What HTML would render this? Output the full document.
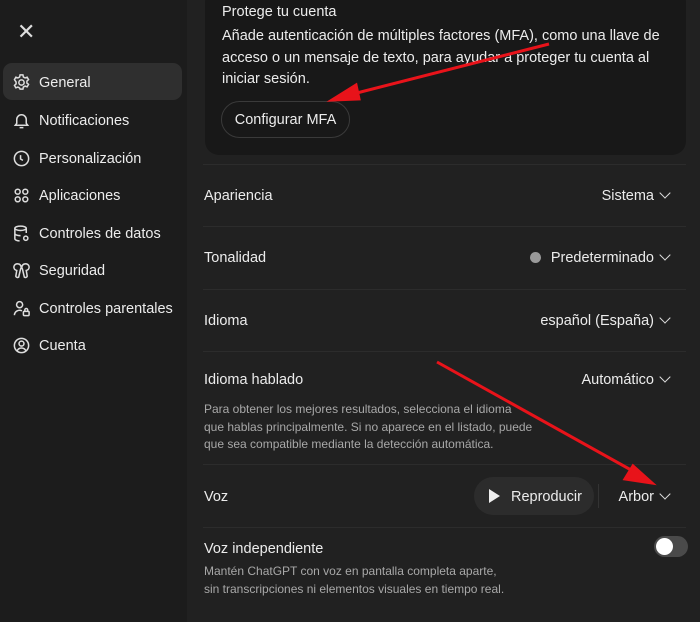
<!DOCTYPE html>
<html><head><meta charset="utf-8"><style>
*{margin:0;padding:0;box-sizing:border-box}
body{width:700px;height:622px;overflow:hidden;background:#212121;font-family:"Liberation Sans",sans-serif;color:#ececec;position:relative}
.side{position:absolute;left:0;top:0;width:187px;height:622px;background:#1c1c1c}
.a{position:absolute;white-space:nowrap}
.nav{position:absolute;left:12px;font-size:14.5px;color:#ececec;display:flex;align-items:center;gap:8px}
.nav svg{width:19px;height:19px;stroke:#ddd;fill:none;stroke-width:1.6}
.sel{position:absolute;left:3px;top:63px;width:179px;height:37px;background:#2f2f2f;border-radius:9px}
.card{position:absolute;left:205px;top:-12px;width:481px;height:167px;background:#181818;border-radius:14px}
.hr{position:absolute;left:203px;width:483px;height:1px;background:#2c2c2c}
.lbl{font-size:14.5px;color:#ececec}
.val{font-size:14.5px;color:#ececec;right:30px}
.chev{position:absolute;right:31px;width:8px;height:8px;border-right:1.6px solid #ddd;border-bottom:1.6px solid #ddd;transform:rotate(45deg)}
.help{font-size:12px;color:#a8a8a8;line-height:17.5px}
</style></head><body>
<div class="side"></div>
<div class="a" style="left:17px;top:21px;font-size:22px;color:#ddd;line-height:22px">✕</div>
<div class="sel"></div>
<div class="nav" style="top:73px"><svg viewBox="0 0 20 20"><circle cx="10" cy="10" r="2.8"/><path d="M8.5 2h3l.5 2.2 1.8 1 2.1-.8 1.5 2.6-1.7 1.5v2l1.7 1.5-1.5 2.6-2.1-.8-1.8 1-.5 2.2h-3L8 15.8l-1.8-1-2.1.8-1.5-2.6 1.7-1.5v-2L2.6 7l1.5-2.6 2.1.8 1.8-1z"/></svg>General</div>
<div class="nav" style="top:111px"><svg viewBox="0 0 20 20"><path d="M5 13V9a5 5 0 0110 0v4l1.5 2h-13zM8 17.5h4"/></svg>Notificaciones</div>
<div class="nav" style="top:149px"><svg viewBox="0 0 20 20"><circle cx="10" cy="10" r="7.5"/><path d="M9 6.5v4l2.5 1.5"/></svg>Personalización</div>
<div class="nav" style="top:186px"><svg viewBox="0 0 20 20"><circle cx="6" cy="6" r="2.6"/><circle cx="14" cy="6" r="2.6"/><circle cx="6" cy="14" r="2.6"/><circle cx="14" cy="14" r="2.6"/></svg>Aplicaciones</div>
<div class="nav" style="top:224px"><svg viewBox="0 0 20 20"><ellipse cx="9" cy="4.5" rx="6" ry="2.3"/><path d="M3 4.5v11c0 1.3 2.6 2.3 5 2.3M15 4.5v5M3 10c0 1.3 2.6 2.3 6 2.3"/><circle cx="14.5" cy="15" r="2.2"/></svg>Controles de datos</div>
<div class="nav" style="top:261px"><svg viewBox="0 0 20 20"><path d="M6 3a3.5 3.5 0 013 5.5L7 17a2 2 0 01-3-1l1-6A3.5 3.5 0 016 3zM14 3a3.5 3.5 0 00-3 5.5l2 8.5a2 2 0 003-1l-1-6A3.5 3.5 0 0014 3z"/></svg>Seguridad</div>
<div class="nav" style="top:299px"><svg viewBox="0 0 20 20"><circle cx="8" cy="6" r="3.2"/><path d="M2.5 17a5.5 5.5 0 018-4.5"/><rect x="12" y="13" width="6" height="4.5" rx="1"/><path d="M13.5 13v-1.5a1.5 1.5 0 013 0V13"/></svg>Controles parentales</div>
<div class="nav" style="top:336px"><svg viewBox="0 0 20 20"><circle cx="10" cy="10" r="7.5"/><circle cx="10" cy="8" r="2.6"/><path d="M5.5 15.5a5 5 0 019 0"/></svg>Cuenta</div>

<div class="card"></div>
<div class="a" style="left:222px;top:4px;font-size:14.5px">Protege tu cuenta</div>
<div class="a" style="left:222px;top:26px;font-size:14.5px;line-height:21.5px;white-space:normal;width:460px">Añade autenticación de múltiples factores (MFA), como una llave de acceso o un mensaje de texto, para ayudar a proteger tu cuenta al iniciar sesión.</div>
<div class="a" style="left:221px;top:101px;width:129px;height:37px;border:1px solid #3a3a3a;border-radius:19px;font-size:14.5px;text-align:center;line-height:37px">Configurar MFA</div>

<div class="hr" style="top:164px"></div>
<div class="a lbl" style="left:204px;top:188px">Apariencia</div>
<div class="a val" style="right:46px;top:188px">Sistema</div><div class="chev" style="top:189px"></div>
<div class="hr" style="top:226px"></div>
<div class="a lbl" style="left:204px;top:250px">Tonalidad</div>
<div class="a" style="left:530px;top:252px;width:11px;height:11px;border-radius:50%;background:#9a9a9a"></div>
<div class="a val" style="right:46px;top:250px">Predeterminado</div><div class="chev" style="top:251px"></div>
<div class="hr" style="top:289px"></div>
<div class="a lbl" style="left:204px;top:313px">Idioma</div>
<div class="a val" style="right:46px;top:313px">español (España)</div><div class="chev" style="top:314px"></div>
<div class="hr" style="top:351px"></div>
<div class="a lbl" style="left:204px;top:372px">Idioma hablado</div>
<div class="a val" style="right:46px;top:372px">Automático</div><div class="chev" style="top:373px"></div>
<div class="a help" style="left:204px;top:401px">Para obtener los mejores resultados, selecciona el idioma<br>que hablas principalmente. Si no aparece en el listado, puede<br>que sea compatible mediante la detección automática.</div>
<div class="hr" style="top:464px"></div>
<div class="a lbl" style="left:204px;top:489px">Voz</div>
<div class="a" style="left:474px;top:477px;width:120px;height:38px;border-radius:19px;background:#2c2c2c"></div>
<svg class="a" style="left:488px;top:488px" width="13" height="16"><path d="M1 1l11 7-11 7z" fill="#eee"/></svg>
<div class="a lbl" style="left:511px;top:489px">Reproducir</div>
<div class="a" style="left:598px;top:484px;width:1px;height:24px;background:#333"></div>
<div class="a val" style="right:46px;top:489px">Arbor</div><div class="chev" style="top:490px"></div>
<div class="hr" style="top:527px"></div>
<div class="a lbl" style="left:204px;top:541px">Voz independiente</div>
<div class="a" style="left:654px;top:536px;width:34px;height:21px;border-radius:11px;background:#4a4a4a"></div>
<div class="a" style="left:656px;top:538px;width:17px;height:17px;border-radius:50%;background:#fff"></div>
<div class="a help" style="left:204px;top:563px">Mantén ChatGPT con voz en pantalla completa aparte,<br>sin transcripciones ni elementos visuales en tiempo real.</div>

<svg class="a" style="left:0;top:0" width="700" height="622">
<g stroke="#e8131a" stroke-width="3" fill="#e8131a">
<line x1="549" y1="44" x2="345" y2="96"/>
<path d="M332 100l24-15 3 14z"/>
<line x1="437" y1="362" x2="640" y2="475"/>
<path d="M652 483l-27-4 8-13z"/>
</g></svg>
</body></html>
